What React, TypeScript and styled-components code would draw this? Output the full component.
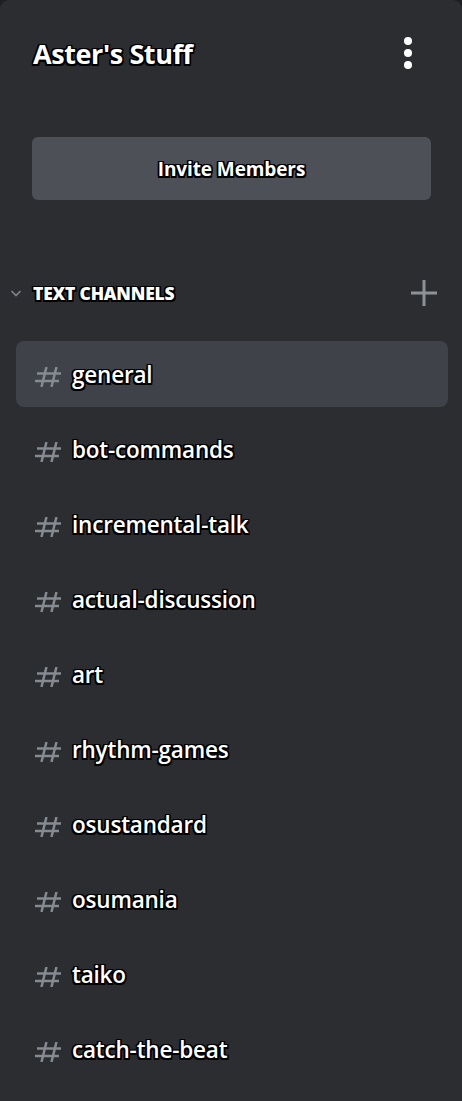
import React from "react";
import styled, { createGlobalStyle } from "styled-components";

const GlobalStyle = createGlobalStyle`
  html, body {
    margin: 0;
    padding: 0;
    background: #1e1f22;
  }
  * { box-sizing: border-box; }
`;

const outline = `
  text-shadow:
    -1.5px -1.5px 0 #000, 1.5px -1.5px 0 #000,
    -1.5px 1.5px 0 #000, 1.5px 1.5px 0 #000,
    0 -1.5px 0 #000, 0 1.5px 0 #000,
    -1.5px 0 0 #000, 1.5px 0 0 #000;
`;

const Sidebar = styled.div`
  width: 462px;
  height: 1101px;
  background: #2b2d31;
  border-radius: 9px 9px 0 0;
  font-family: "Open Sans", "Noto Sans", sans-serif;
  color: #fff;
  display: flex;
  flex-direction: column;
  overflow: hidden;
`;

const Header = styled.div`
  height: 106px;
  display: flex;
  align-items: center;
  justify-content: space-between;
  padding: 0 42px 0 33px;
`;

const Title = styled.h1`
  margin: 0;
  font-size: 27px;
  font-weight: 700;
  letter-spacing: -0.4px;
  ${outline}
`;

const MoreButton = styled.div`
  width: 24px;
  display: flex;
  flex-direction: column;
  align-items: center;
  gap: 4px;
`;

const Dot = styled.span`
  width: 8px;
  height: 8px;
  border-radius: 50%;
  background: #fff;
`;

const InviteButton = styled.div`
  margin: 31px 31px 0 32px;
  height: 63px;
  border-radius: 6px;
  background: #4e5058;
  display: flex;
  align-items: center;
  justify-content: center;
  font-size: 19px;
  font-weight: 700;
  letter-spacing: -0.1px;
  ${outline}
`;

const SectionHeader = styled.div`
  margin-top: 79px;
  height: 28px;
  display: flex;
  align-items: center;
  padding: 0 24px 0 10px;
`;

const Chevron = styled.svg`
  width: 12px;
  height: 12px;
  margin-right: 11px;
  flex-shrink: 0;
`;

const SectionTitle = styled.span`
  flex: 1;
  font-size: 17.5px;
  font-weight: 800;
  letter-spacing: -0.2px;
  text-transform: uppercase;
  ${outline}
`;

const PlusIcon = styled.svg`
  width: 28px;
  height: 28px;
`;

const ChannelList = styled.div`
  margin-top: 34px;
  padding: 0 14px 0 16px;
  display: flex;
  flex-direction: column;
  gap: 9px;
`;

const ChannelRow = styled.div<{ $selected?: boolean }>`
  height: 66px;
  border-radius: 8px;
  background: ${(p) => (p.$selected ? "#404249" : "transparent")};
  display: flex;
  align-items: center;
  padding-left: 19px;
  gap: 11px;
`;

const Hash = styled.svg`
  width: 26px;
  height: 20px;
  flex-shrink: 0;
  margin-top: 6px;
`;

const ChannelName = styled.span`
  font-size: 22.5px;
  font-weight: 600;
  letter-spacing: -0.2px;
  ${outline}
`;

const channels = [
  "general",
  "bot-commands",
  "incremental-talk",
  "actual-discussion",
  "art",
  "rhythm-games",
  "osustandard",
  "osumania",
  "taiko",
  "catch-the-beat",
];

const HashIcon = () => (
  <Hash viewBox="0 0 26 20" fill="none">
    <g stroke="#868a91" strokeWidth="2.5" strokeLinecap="butt">
      <line x1="11.5" y1="0" x2="6.5" y2="20" />
      <line x1="21.5" y1="0" x2="16.5" y2="20" />
      <line x1="2" y1="6.5" x2="26" y2="6.5" />
      <line x1="0" y1="14" x2="24" y2="14" />
    </g>
  </Hash>
);

export default function App() {
  return (
    <>
      <GlobalStyle />
      <Sidebar>
        <Header>
          <Title>Aster's Stuff</Title>
          <MoreButton>
            <Dot />
            <Dot />
            <Dot />
          </MoreButton>
        </Header>
        <InviteButton>Invite Members</InviteButton>
        <SectionHeader>
          <Chevron viewBox="0 0 12 12" fill="none">
            <path d="M1.5 4 L6 8.5 L10.5 4" stroke="#80848e" strokeWidth="1.6" />
          </Chevron>
          <SectionTitle>Text Channels</SectionTitle>
          <PlusIcon viewBox="0 0 28 28" fill="none">
            <path d="M14 1 V27 M1 14 H27" stroke="#8e9297" strokeWidth="3" />
          </PlusIcon>
        </SectionHeader>
        <ChannelList>
          {channels.map((c, i) => (
            <ChannelRow key={c} $selected={i === 0}>
              <HashIcon />
              <ChannelName>{c}</ChannelName>
            </ChannelRow>
          ))}
        </ChannelList>
      </Sidebar>
    </>
  );
}
